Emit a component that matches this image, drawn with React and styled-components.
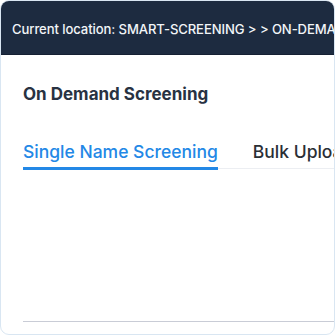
import React from 'react';
import styled, { createGlobalStyle } from 'styled-components';

const GlobalStyle = createGlobalStyle`
  html, body {
    margin: 0;
    padding: 0;
    background: #ffffff;
    font-family: Inter, 'Noto Sans', sans-serif;
  }
`;

const Card = styled.div`
  box-sizing: border-box;
  width: 335px;
  height: 335px;
  border: 1px solid #d9e6f2;
  border-radius: 9px;
  overflow: hidden;
  background: #ffffff;
  display: flex;
  flex-direction: column;
`;

const Header = styled.div`
  height: 53px;
  flex-shrink: 0;
  background: #1d2b40;
  border-bottom: 1px solid #152033;
  display: flex;
  align-items: center;
  padding-left: 11px;
  white-space: nowrap;
  overflow: hidden;
`;

const Crumb = styled.span`
  color: #f2f5f8;
  font-size: 13.1px;
  font-weight: 500;
  letter-spacing: -0.1px;
  padding-top: 2px;
`;

const Body = styled.div`
  flex: 1;
  display: flex;
  flex-direction: column;
  padding: 28px 0 12px 22px;
`;

const Title = styled.h2`
  margin: 0;
  color: #283242;
  font-size: 17px;
  font-weight: 700;
  line-height: 22px;
`;

const Tabs = styled.div`
  display: flex;
  margin-top: 35px;
  border-bottom: 1px solid #eceef2;
  white-space: nowrap;
`;

const Tab = styled.div`
  font-size: 17.5px;
  font-weight: 500;
  line-height: 24px;
  padding-bottom: 3px;
  margin-right: 35px;
  margin-bottom: -2px;
  color: ${(p) => (p.$active ? '#2388e6' : '#2a2e35')};
  border-bottom: 3px solid ${(p) => (p.$active ? '#2388e6' : 'transparent')};
`;

const Spacer = styled.div`
  flex: 1;
`;

const Rule = styled.div`
  height: 1px;
  background: #c9ccd6;
`;

export default function App() {
  return (
    <>
      <GlobalStyle />
      <Card>
        <Header>
          <Crumb>Current location: SMART-SCREENING &gt; &gt; ON-DEMAND SCREENING</Crumb>
        </Header>
        <Body>
          <Title>On Demand Screening</Title>
          <Tabs>
            <Tab $active>Single Name Screening</Tab>
            <Tab>Bulk Upload</Tab>
          </Tabs>
          <Spacer />
          <Rule />
        </Body>
      </Card>
    </>
  );
}
